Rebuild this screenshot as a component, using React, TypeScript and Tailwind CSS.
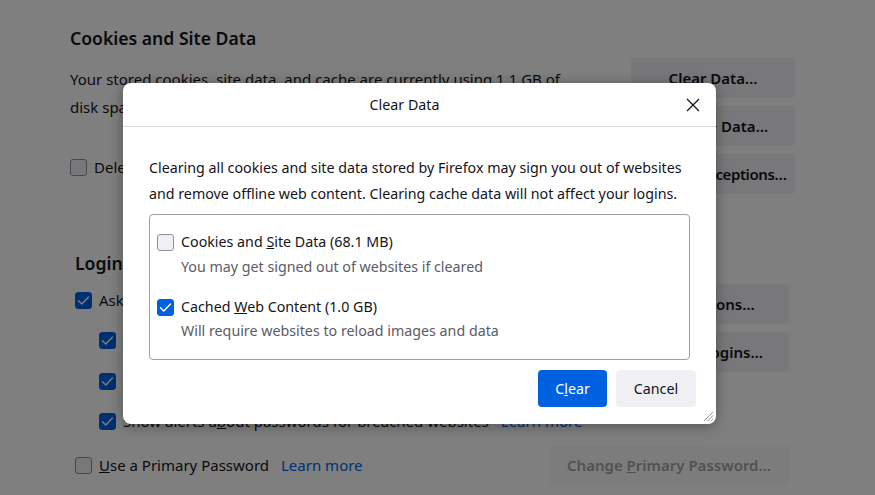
import React from 'react';

const font = "font-['Noto_Sans',sans-serif]";

function Check({ checked }: { checked?: boolean }) {
  return (
    <span
      className={
        'flex h-[17px] w-[17px] shrink-0 items-center justify-center rounded-[3px] border ' +
        (checked ? 'border-[#0061e0] bg-[#0061e0]' : 'border-[#8f8f9d] bg-[#f0f0f4]')
      }
    >
      {checked ? (
        <svg width="13" height="13" viewBox="0 0 13 13" fill="none">
          <path d="M1.5 6.8 L4.8 10 L11.5 3" stroke="white" strokeWidth="1.4" strokeLinecap="round" strokeLinejoin="round" />
        </svg>
      ) : null}
    </span>
  );
}

function PageButton({ children, className = '' }: { children: React.ReactNode; className?: string }) {
  return (
    <div className={'flex h-[40px] items-center justify-center whitespace-nowrap rounded-[4px] bg-[#f0f0f4] text-[15px] font-semibold text-[#15141a] ' + className}>
      {children}
    </div>
  );
}

function Row({ checked, children, className = '' }: { checked?: boolean; children: React.ReactNode; className?: string }) {
  return (
    <div className={'flex items-center gap-[7px] whitespace-nowrap text-[#15141a] ' + className}>
      <Check checked={checked} />
      <span>{children}</span>
    </div>
  );
}

function Background() {
  return (
    <div className="h-[495px] w-full overflow-hidden bg-white text-[15px]">
      <section className="w-[795px] pl-[70px] pt-[26px]">
        <h2 className="h-[24px] text-[17.6px] font-semibold leading-[24px] text-[#15141a]">Cookies and Site Data</h2>
        <div className="mt-[8px] flex justify-between">
          <div>
            <p className="pt-[7px] leading-[28px] text-[#15141a]">
              Your stored cookies, site data, and cache are currently using 1.1 GB of
              <br />
              disk space.
            </p>
            <Row className="mt-[32px] h-[28px]">Delete cookies and site data when Firefox is closed</Row>
          </div>
          <div className="flex w-[164px] flex-col gap-2">
            <PageButton>Clear Data…</PageButton>
            <PageButton>Manage Data…</PageButton>
            <PageButton className="tracking-[-0.4px]">Manage Exceptions…</PageButton>
          </div>
        </div>
      </section>

      <section className="mt-[57px] w-[789px] pl-[75px]">
        <h2 className="h-[24px] text-[17.6px] font-semibold leading-[24px] text-[#15141a]">Logins and Passwords</h2>
        <div className="mt-[9px] flex justify-between">
          <div>
            <Row checked className="h-[32px]">Ask to save logins and passwords for websites</Row>
            <Row checked className="h-[48px] pl-[24px]">Autofill logins and passwords</Row>
            <Row checked className="h-[34px] pl-[24px]">Suggest and generate strong passwords</Row>
            <Row checked className="h-[46px] pl-[24px]">
              Show alerts a<u>b</u>out passwords for breached websites
              <span className="ml-[12px] text-[#0061e0]">Learn more</span>
            </Row>
          </div>
          <div className="flex w-[160px] flex-col gap-2">
            <PageButton className="h-[39px]">Exceptions…</PageButton>
            <PageButton className="h-[39px]">Saved Logins…</PageButton>
          </div>
        </div>
        <div className="flex h-[42px] items-center justify-between">
          <Row>
            <u>U</u>se a Primary Password
            <span className="ml-[12px] text-[#0061e0]">Learn more</span>
          </Row>
          <PageButton className="w-[240px] opacity-40">
            Change&nbsp;<u>P</u>rimary Password…
          </PageButton>
        </div>
      </section>
    </div>
  );
}

function Dialog() {
  return (
    <div className="absolute left-[123px] top-[83px] flex h-[341px] w-[593px] flex-col rounded-[8px] bg-white text-[14.25px] shadow-[0_2px_14px_rgba(0,0,0,0.35)]">
      <div className="relative flex h-[44px] shrink-0 items-center justify-center border-b border-[#d7d7db] pr-[30px]">
        <span className="text-[#15141a]">Clear Data</span>
        <svg className="absolute right-[16px] top-[15px]" width="14" height="14" viewBox="0 0 14 14">
          <path d="M1 1 L13 13 M13 1 L1 13" stroke="#15141a" strokeWidth="1.3" />
        </svg>
      </div>
      <div className="px-[26px] pt-[28px]">
        <p className="whitespace-nowrap leading-[26px] text-[#15141a]">
          Clearing all cookies and site data stored by Firefox may sign you out of websites
          <br />
          and remove offline web content. Clearing cache data will not affect your logins.
        </p>
        <div className="mt-[7px] h-[146px] w-[541px] rounded-[4px] border border-[#9e9ea6] pl-[7px] pt-[15px]">
          <Row className="h-[24px]">
            Cookies and <u>S</u>ite Data (68.1 MB)
          </Row>
          <div className="h-[26px] pl-[24px] leading-[26px] text-[#5b5b66]">You may get signed out of websites if cleared</div>
          <Row checked className="mt-[15px] h-[24px]">
            Cached <u>W</u>eb Content (1.0 GB)
          </Row>
          <div className="h-[24px] pl-[24px] leading-[24px] text-[#5b5b66]">Will require websites to reload images and data</div>
        </div>
      </div>
      <div className="mt-[10px] flex justify-end gap-[9px] pr-[20px]">
        <div className="flex h-[37px] w-[69px] items-center justify-center rounded-[4px] bg-[#0061e0] text-white">
          C<u>l</u>ear
        </div>
        <div className="flex h-[37px] w-[80px] items-center justify-center rounded-[4px] bg-[#f0f0f4] text-[#15141a]">
          Cancel
        </div>
      </div>
      <svg className="absolute bottom-[2px] right-[2px]" width="12" height="12" viewBox="0 0 12 12">
        <path d="M11 2 L2 11 M11 5.5 L5.5 11 M11 9 L9 11" stroke="#8f8f9d" strokeWidth="1" />
      </svg>
    </div>
  );
}

export default function App() {
  return (
    <div className={'relative h-[495px] w-[875px] overflow-hidden ' + font}>
      <Background />
      <div className="absolute inset-0 bg-black/50" />
      <Dialog />
    </div>
  );
}
